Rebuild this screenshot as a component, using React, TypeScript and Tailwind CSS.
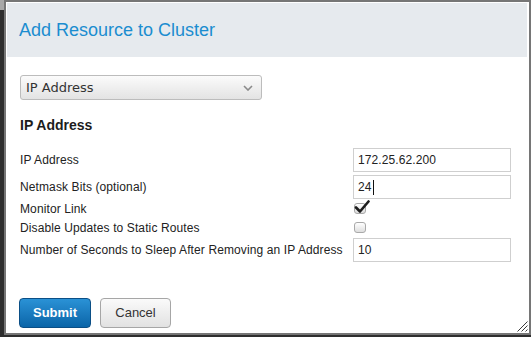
const labelFont = { fontFamily: '"Liberation Sans", Arial, sans-serif' };

function TextField({ value, caret }: { value: string; caret?: boolean }) {
  return (
    <div className="flex h-[24px] w-[158px] items-center border border-[#cfcfcf] bg-white pl-[4px] text-[12px] tracking-[0.1px] text-[#222]">
      <span>{value}</span>
      {caret && <span className="ml-[1px] inline-block h-[15px] w-px bg-[#111]" />}
    </div>
  );
}

function Checkbox({ checked }: { checked?: boolean }) {
  return (
    <div className="relative ml-[1px] h-[11px] w-[12px] rounded-[3px] border border-[#a9a9a9] bg-gradient-to-b from-[#ffffff] to-[#dedede]">
      {checked && (
        <svg className="absolute -left-[1px] -top-[4px]" width="16" height="14" viewBox="0 0 16 14">
          <path d="M2 7.5 L6 11.5 L14.5 1.5" fill="none" stroke="#1d1d1d" strokeWidth="2.6" strokeLinecap="round" strokeLinejoin="round" />
        </svg>
      )}
    </div>
  );
}

function Row({ label, height, children }: { label: string; height: string; children: React.ReactNode }) {
  return (
    <div className={`flex items-center ${height}`}>
      <div className="w-[333px] shrink-0 text-[12px] tracking-[0.11px] text-[#222]">{label}</div>
      {children}
    </div>
  );
}

export default function App() {
  return (
    <div className="flex h-[337px] w-[531px] bg-[#2e2e2e]" style={labelFont}>
      <div className="flex w-[4px] flex-col">
        <div className="h-[10px] bg-[#a8a8a8]" />
      </div>
      <div className="relative flex h-[335px] w-[527px] flex-col border-2 border-[#767676] bg-white p-px pr-[2px]">
        <div className="flex h-[54px] items-center bg-[#e6eaee] pl-[12px]">
          <h1 className="text-[18px] leading-none text-[#1b8dd0]">Add Resource to Cluster</h1>
        </div>

        <div className="flex flex-col pl-[13px] pr-[14px]">
          <div className="mt-[18px] flex h-[25px] w-[242px] items-center justify-between rounded-[3px] border border-[#bcbcbc] bg-gradient-to-b from-[#fbfbfb] to-[#e3e3e3] pl-[5px] pr-[8px]">
            <span className="text-[13px] text-[#333]" style={{ fontFamily: '"DejaVu Sans", sans-serif' }}>
              IP Address
            </span>
            <svg width="10" height="6" viewBox="0 0 10 6">
              <path d="M1 1 L5 5 L9 1" fill="none" stroke="#8a8a8a" strokeWidth="1.6" />
            </svg>
          </div>

          <h2 className="mt-[16px] text-[14px] font-bold leading-[18px] text-[#1c1c1c]">IP Address</h2>

          <div className="mt-[14px] flex flex-col">
            <Row label="IP Address" height="h-[24px]">
              <TextField value="172.25.62.200" />
            </Row>
            <div className="mt-[3px]">
              <Row label="Netmask Bits (optional)" height="h-[24px]">
                <TextField value="24" caret />
              </Row>
            </div>
            <Row label="Monitor Link" height="h-[19px]">
              <Checkbox checked />
            </Row>
            <Row label="Disable Updates to Static Routes" height="h-[19px]">
              <Checkbox />
            </Row>
            <div className="mt-[1px]">
              <Row label="Number of Seconds to Sleep After Removing an IP Address" height="h-[24px]">
                <TextField value="10" />
              </Row>
            </div>
          </div>

          <div className="mt-[36px] flex gap-[9px]">
            <button className="-ml-[1px] h-[30px] w-[72px] rounded-[4px] border border-[#0b4f86] bg-gradient-to-b from-[#2a92d6] to-[#0a65a8] text-[13px] font-bold text-white">
              Submit
            </button>
            <button className="h-[30px] w-[71px] rounded-[4px] border border-[#a6a6a6] bg-gradient-to-b from-[#fafafa] to-[#e2e2e2] text-[13px] text-[#333]">
              Cancel
            </button>
          </div>
        </div>

        <svg className="absolute bottom-[1px] right-[1px]" width="12" height="12" viewBox="0 0 12 12">
          <path d="M11.5 1.5 L1.5 11.5 M11.5 5.5 L5.5 11.5 M11.5 9.5 L9.5 11.5" stroke="#3a3a3a" strokeWidth="1" />
        </svg>
      </div>
    </div>
  );
}
